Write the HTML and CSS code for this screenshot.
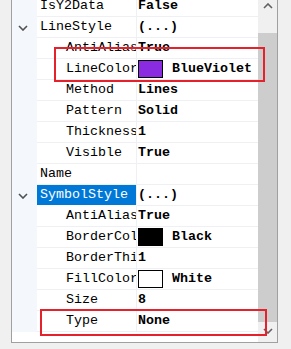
FILE: index.html
```html
<!DOCTYPE html>
<html lang="en">
<head>
  <meta charset="UTF-8">
  <title>Property Grid</title>
  <link rel="stylesheet" href="styles.css">
</head>
<body>
  <div class="grid">
    <div class="rows">
      <div class="row"><div class="gutter"></div><div class="name">IsY2Data</div><div class="value">False</div></div>
      <div class="row">
        <div class="gutter"><svg width="10" height="6" viewBox="0 0 10 6"><path d="M1 1 L5 5 L9 1" fill="none" stroke="#505050" stroke-width="1.6"/></svg></div>
        <div class="name">LineStyle</div><div class="value">(...)</div>
      </div>
      <div class="row"><div class="gutter"></div><div class="name child">AntiAlias</div><div class="value">True</div></div>
      <div class="row"><div class="gutter"></div><div class="name child">LineColor</div><div class="value"><span class="swatch violet"></span>BlueViolet</div></div>
      <div class="row"><div class="gutter"></div><div class="name child">Method</div><div class="value">Lines</div></div>
      <div class="row"><div class="gutter"></div><div class="name child">Pattern</div><div class="value">Solid</div></div>
      <div class="row"><div class="gutter"></div><div class="name child">Thickness</div><div class="value">1</div></div>
      <div class="row"><div class="gutter"></div><div class="name child">Visible</div><div class="value">True</div></div>
      <div class="row"><div class="gutter"></div><div class="name">Name</div><div class="value"></div></div>
      <div class="row">
        <div class="gutter"><svg width="10" height="6" viewBox="0 0 10 6"><path d="M1 1 L5 5 L9 1" fill="none" stroke="#505050" stroke-width="1.6"/></svg></div>
        <div class="name selected">SymbolStyle</div><div class="value">(...)</div>
      </div>
      <div class="row"><div class="gutter"></div><div class="name child">AntiAlias</div><div class="value">True</div></div>
      <div class="row"><div class="gutter"></div><div class="name child">BorderColor</div><div class="value"><span class="swatch black"></span>Black</div></div>
      <div class="row"><div class="gutter"></div><div class="name child">BorderThickness</div><div class="value">1</div></div>
      <div class="row"><div class="gutter"></div><div class="name child">FillColor</div><div class="value"><span class="swatch white"></span>White</div></div>
      <div class="row"><div class="gutter"></div><div class="name child">Size</div><div class="value">8</div></div>
      <div class="row"><div class="gutter"></div><div class="name child">Type</div><div class="value">None</div></div>
    </div>

    <!-- Barra de rolagem -->
    <div class="scrollbar">
      <div class="arrow"><svg width="10" height="6" viewBox="0 0 10 6"><path d="M1 5 L5 1 L9 5" fill="none" stroke="#606060" stroke-width="1.6"/></svg></div>
      <div class="thumb"></div>
      <div class="arrow"><svg width="10" height="6" viewBox="0 0 10 6"><path d="M1 1 L5 5 L9 1" fill="none" stroke="#606060" stroke-width="1.6"/></svg></div>
    </div>

    <!-- Marcações -->
    <div class="mark mark-linecolor"></div>
    <div class="mark mark-type"></div>
  </div>
</body>
</html>
```

FILE: styles.css
```css
body {
  margin: 0;
  background: #f0f0f0;
  font-family: "Liberation Mono", "DejaVu Sans Mono", monospace;
  font-size: 13.34px;
  color: #000;
}

.grid {
  position: relative;
  display: flex;
  margin-left: 11px;
  width: 265px;
  height: 342px;
  background: white;
  border: 1px solid #a0a0a0;
  border-top: none;
  overflow: hidden;
}

.rows {
  width: 246px;
  margin-top: -4px;
}

.row {
  display: flex;
  height: 21px;
  line-height: 20px;
}

.gutter {
  width: 25px;
  flex-shrink: 0;
  background: #f4f7fc;
  display: flex;
  align-items: center;
  padding-left: 6px;
  box-sizing: border-box;
}

.gutter svg {
  display: block;
}

.name {
  width: 100px;
  flex-shrink: 0;
  box-sizing: border-box;
  padding-left: 3px;
  white-space: nowrap;
  overflow: hidden;
  border-right: 1px solid #eef0f4;
  border-bottom: 1px solid #eef0f4;
  height: 21px;
}

.name.child {
  padding-left: 29px;
}

.name.selected {
  background: #0078d7;
  color: white;
  border-bottom-color: white;
}

.value {
  flex: 1;
  font-weight: bold;
  padding-left: 1px;
  white-space: nowrap;
  overflow: hidden;
  border-bottom: 1px solid #eef0f4;
  height: 21px;
  box-sizing: border-box;
  display: flex;
  align-items: flex-start;
}

.swatch {
  display: inline-block;
  width: 23px;
  height: 16px;
  border: 1px solid #000;
  margin: 1px 9px 0 0;
  flex-shrink: 0;
}

.swatch.violet {
  background: #8a2be2;
}

.swatch.black {
  background: #000;
}

.swatch.white {
  background: #fff;
}

.scrollbar {
  width: 19px;
  background: #f0f0f0;
  display: flex;
  flex-direction: column;
}

.arrow {
  height: 17px;
  display: flex;
  align-items: center;
  justify-content: center;
}

.arrow:first-child {
  height: 12px;
  align-items: flex-start;
  padding-top: 3px;
}

.thumb {
  margin-top: 18px;
  height: 289px;
  background: #cdcdcd;
}

.mark {
  position: absolute;
  border: 2px solid #e5212b;
}

.mark-linecolor {
  left: 42px;
  top: 47px;
  width: 207px;
  height: 31px;
}

.mark-type {
  left: 28px;
  top: 309px;
  width: 223px;
  height: 23px;
}
```
